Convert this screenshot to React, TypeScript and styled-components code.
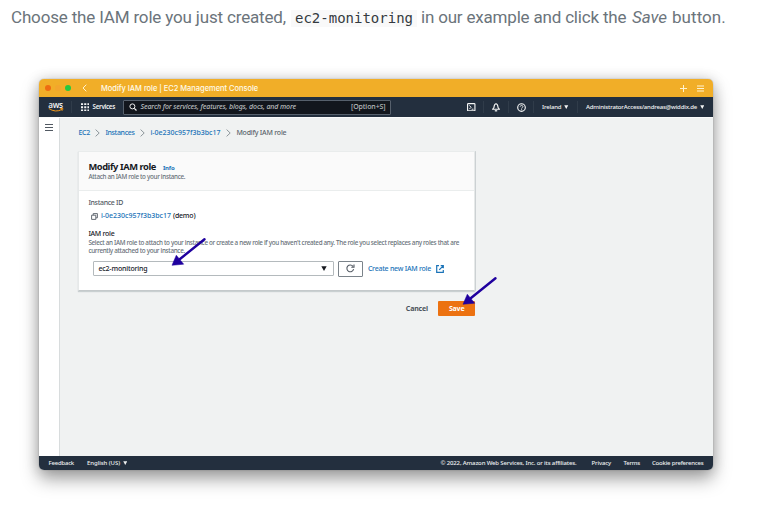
import React from 'react';
import styled, { createGlobalStyle } from 'styled-components';

const GlobalStyle = createGlobalStyle`
  * { box-sizing: border-box; }
  body { margin: 0; background: #fff; overflow: hidden; }
`;

const Article = styled.main`
  width: 778px;
  height: 515px;
  overflow: hidden;
  background: #fff;
  font-family: 'Noto Sans', 'Open Sans', sans-serif;
`;

const Intro = styled.p`
  display: flex;
  align-items: center;
  height: 34px;
  margin: 0 0 0 11px;
  white-space: pre;
  color: #6b747b;
  font: 400 17px/34px Roboto, sans-serif;
`;

const Phrase = styled.span<{ $width: number; $spacing: number }>`
  flex: none;
  width: ${(p) => p.$width}px;
  letter-spacing: ${(p) => p.$spacing}px;
`;

const Code = styled.code`
  flex: none;
  width: 126px;
  height: 17px;
  margin: 3px 4px 0 0;
  padding-left: 4px;
  background: #f9f9f9;
  color: #343a40;
  font: 14px/17px 'DejaVu Sans Mono', monospace;
`;

const Figure = styled.figure`
  margin: 28px 0 0 11px;
  padding: 17px 28px 0;
  width: 730px;
  height: 440px;
  background: #fff;
`;

const Window = styled.section`
  position: relative;
  display: flex;
  flex-direction: column;
  width: 674px;
  height: 391px;
  border-radius: 5px;
  background: #f0f2f2;
  box-shadow: 0 9px 18px rgba(0, 0, 0, 0.36), 0 0 14px rgba(0, 0, 0, 0.16), 0 0 1px rgba(0, 0, 0, 0.5);
`;

const TitleBar = styled.header`
  display: flex;
  align-items: center;
  flex: none;
  height: 18px;
  padding: 0 9px 0 6px;
  border-radius: 5px 5px 0 0;
  background: #f1ae28;
`;

const Light = styled.i<{ $color: string }>`
  width: 6px;
  height: 6px;
  margin-right: 4px;
  border-radius: 50%;
  background: ${(p) => p.$color};
`;

const WindowTitle = styled.h1`
  flex: 1;
  margin: 0;
  padding: 1px 0 0 14px;
  color: #fffbea;
  font: 500 7.5px/17px Inter, sans-serif;
  letter-spacing: -0.035px;
  white-space: nowrap;
`;

const Icon = styled.svg<{ $w: number; $h: number; $ml?: number; $mr?: number }>`
  flex: none;
  display: block;
  width: ${(p) => p.$w}px;
  height: ${(p) => p.$h}px;
  margin-left: ${(p) => p.$ml ?? 0}px;
  margin-right: ${(p) => p.$mr ?? 0}px;
  fill: none;
  stroke: currentColor;
`;

const Nav = styled.nav`
  display: flex;
  align-items: center;
  flex: none;
  height: 20px;
  padding: 0 9px 0 8.5px;
  background: #232f3e;
  color: #f4f5f5;
`;

const Brand = styled.div`
  display: flex;
  flex-direction: column;
  align-items: center;
  width: 16px;
  margin-top: -2px;
  color: #f4f5f5;
  font: 600 8.2px/7px 'Open Sans', sans-serif;
  letter-spacing: -0.25px;
`;

const Divider = styled.i<{ $ml: number; $mr: number }>`
  flex: none;
  width: 1px;
  height: 12px;
  margin-left: ${(p) => p.$ml}px;
  margin-right: ${(p) => p.$mr}px;
  background: #303c4a;
`;

const NavLabel = styled.span<{ $width: number; $size?: number; $spacing?: number; $weight?: number }>`
  flex: none;
  width: ${(p) => p.$width}px;
  font-size: ${(p) => p.$size ?? 6}px;
  font-weight: ${(p) => p.$weight ?? 500};
  line-height: 12px;
  letter-spacing: ${(p) => p.$spacing ?? -0.16}px;
  white-space: nowrap;
`;

const Search = styled.div`
  display: flex;
  align-items: center;
  flex: none;
  width: 267.5px;
  height: 15px;
  margin-left: 8px;
  padding: 0 4px 0 5px;
  border: 1px solid #56606c;
  border-radius: 1px;
  background: #12161d;
  color: #b9bdbf;
  font-size: 7px;
  line-height: 12px;
  white-space: nowrap;
`;

const Placeholder = styled.em`
  flex: 1;
  font-weight: 500;
  letter-spacing: -0.117px;
`;

const Shortcut = styled.span`
  font-weight: 500;
  letter-spacing: -0.1px;
`;

const Spacer = styled.div`
  flex: 1;
`;

const Body = styled.div`
  display: flex;
  flex: 1;
  min-height: 0;
  border-top: 1px solid #fafbfb;
`;

const Sidebar = styled.aside`
  flex: none;
  width: 20.5px;
  padding: 6px 0 0 6px;
  border-right: 1px solid #d8dcdd;
  background: #fff;
  color: #3d4650;
`;

const Content = styled.div`
  flex: 1;
  padding-left: 18.9px;
`;

const Breadcrumbs = styled.div`
  display: flex;
  align-items: center;
  height: 10px;
  margin-top: 10px;
  color: #8d979c;
`;

const Crumb = styled.span<{ $width: number; $spacing: number; $current?: boolean }>`
  flex: none;
  width: ${(p) => p.$width}px;
  color: ${(p) => (p.$current ? '#5a646c' : '#1a73b8')};
  font-size: 7px;
  font-weight: 500;
  line-height: 10px;
  letter-spacing: ${(p) => p.$spacing}px;
  white-space: nowrap;
`;

const Card = styled.section`
  width: 396.5px;
  height: 139.5px;
  margin-top: 13px;
  border: 1px solid #e6e9e9;
  border-top-color: #e9ecec;
  border-bottom-color: #c4c9cb;
  background: #fff;
  box-shadow: 0 1px 1px rgba(0, 28, 36, 0.16), 0.5px 0 0.5px rgba(0, 28, 36, 0.12);
`;

const CardHeader = styled.header`
  height: 39px;
  padding: 9px 0 0 9px;
  border-bottom: 1px solid #eaeded;
  background: #fafafa;
`;

const TitleRow = styled.div`
  display: flex;
  align-items: center;
  height: 12px;
  white-space: nowrap;
`;

const CardTitle = styled.h2`
  width: 74.5px;
  margin: 0;
  color: #16191f;
  font-size: 9.3px;
  font-weight: 700;
  line-height: 12px;
  letter-spacing: -0.42px;
`;

const InfoLink = styled.a`
  padding-top: 1px;
  color: #1a73b8;
  font-size: 6px;
  font-weight: 700;
  line-height: 10px;
  letter-spacing: -0.15px;
`;

const Hint = styled.p<{ $spacing: number }>`
  margin: 0;
  color: #687078;
  font-size: 6.3px;
  font-weight: 500;
  line-height: 7.6px;
  letter-spacing: ${(p) => p.$spacing}px;
  white-space: nowrap;
`;

const CardBody = styled.div`
  padding: 7px 0 0 9px;
`;

const FieldLabel = styled.div<{ $strong?: boolean; $spacing: number }>`
  height: 10px;
  color: ${(p) => (p.$strong ? '#16191f' : '#545b64')};
  font-size: 7px;
  font-weight: 500;
  line-height: 10px;
  letter-spacing: ${(p) => p.$spacing}px;
`;

const InstanceRow = styled.div`
  display: flex;
  align-items: center;
  height: 10px;
  margin: 3px 0 8px;
  padding-left: 3px;
  color: #16191f;
  font-size: 7px;
  font-weight: 500;
  line-height: 10px;
  white-space: nowrap;
`;

const InstanceLink = styled.a`
  width: 72px;
  margin-left: 2.5px;
  color: #1a73b8;
  letter-spacing: -0.01px;
`;

const Demo = styled.span`
  letter-spacing: -0.19px;
`;

const RoleRow = styled.div`
  display: flex;
  align-items: center;
  height: 15.5px;
  margin: 7px 0 0 4.5px;
`;

const Select = styled.div`
  display: flex;
  align-items: center;
  justify-content: space-between;
  width: 241px;
  height: 15px;
  padding: 0 6px 0 4.5px;
  border: 1px solid #b4babd;
  border-radius: 1px;
  color: #16191f;
  font-size: 7px;
  font-weight: 500;
  line-height: 12px;
  letter-spacing: -0.17px;
`;

const RefreshButton = styled.button`
  display: flex;
  align-items: center;
  justify-content: center;
  width: 25px;
  height: 15.5px;
  margin: 0 4.5px;
  padding: 0;
  border: 1px solid #7b838a;
  border-radius: 1px;
  background: #fff;
  color: #545b64;
`;

const CreateLink = styled.a`
  display: flex;
  align-items: center;
  color: #1a73b8;
  font-size: 7px;
  font-weight: 500;
  line-height: 12px;
  letter-spacing: -0.25px;
  white-space: nowrap;
`;

const Actions = styled.div`
  display: flex;
  align-items: center;
  justify-content: flex-end;
  width: 396.5px;
  margin-top: 10.5px;
`;

const Button = styled.button<{ $primary?: boolean }>`
  width: ${(p) => (p.$primary ? 36.5 : 43)}px;
  height: 15px;
  padding: 0;
  border: 0;
  border-radius: 1px;
  background: ${(p) => (p.$primary ? '#ec7211' : 'transparent')};
  color: ${(p) => (p.$primary ? '#fff' : '#4c545c')};
  font: 700 7px/15px 'Noto Sans', sans-serif;
  letter-spacing: -0.18px;
`;

const Footer = styled.footer`
  display: flex;
  align-items: center;
  flex: none;
  height: 14.5px;
  padding: 0 9px 0 9.5px;
  border-radius: 0 0 5px 5px;
  background: #232f3e;
  color: #eef0f0;
`;

const Arrow = styled.svg<{ $x: number; $y: number }>`
  position: absolute;
  left: ${(p) => p.$x}px;
  top: ${(p) => p.$y}px;
  width: 36px;
  height: 30px;
  fill: #1f009e;
  stroke: #1f009e;
`;

const Caret = ({ w = 5, h = 4, ml = 0 }: { w?: number; h?: number; ml?: number }) => (
  <Icon $w={w} $h={h} $ml={ml} viewBox="0 0 10 8" preserveAspectRatio="none">
    <path d="M0.5 0.5h9L5 7.8z" fill="currentColor" stroke="none" />
  </Icon>
);

const Separator = () => (
  <Icon $w={5} $h={8} $ml={4.5} $mr={5.5} viewBox="0 0 5 8">
    <path d="M.6.6 4.2 4 .6 7.4" />
  </Icon>
);

const Pointer = ({ x, y }: { x: number; y: number }) => (
  <Arrow $x={x} $y={y} viewBox="0 0 36 30">
    <path d="M33.5 2.3 9 22" strokeWidth="2.4" strokeLinecap="round" />
    <path d="M1 28.3 5.3 18.2 12.7 27.2z" strokeWidth=".5" />
  </Arrow>
);

export default function App() {
  return (
    <Article>
      <GlobalStyle />
      <Intro>
        <Phrase $width={280} $spacing={-0.165}>Choose the IAM role you just created,</Phrase>
        <Code>ec2-monitoring</Code>
        <Phrase $width={211} $spacing={-0.19}>in our example and click the</Phrase>
        <Phrase $width={40} $spacing={-0.1}><em>Save</em></Phrase>
        <Phrase $width={60} $spacing={0.05}>button.</Phrase>
      </Intro>
      <Figure>
        <Window>
          <TitleBar>
            <Light $color="#ee6c12" />
            <Light $color="#f3a62d" />
            <Light $color="#27c840" />
            <Icon $w={5} $h={8} $ml={7} viewBox="0 0 5 8" color="#fff3d0">
              <path d="M4.3.7 1 4l3.3 3.3" strokeWidth="1" />
            </Icon>
            <WindowTitle>Modify IAM role | EC2 Management Console</WindowTitle>
            <Icon $w={7} $h={7} viewBox="0 0 7 7" color="#fff3d0">
              <path d="M3.5 0v7M0 3.5h7" />
            </Icon>
            <Icon $w={7} $h={7} $ml={10.5} viewBox="0 0 7 7" color="#fff3d0">
              <path d="M0 1h7M0 3.5h7M0 6h7" />
            </Icon>
          </TitleBar>
          <Nav>
            <Brand>
              aws
              <Icon $w={16} $h={4} viewBox="0 0 16 4" color="#f59a1b">
                <path d="M.8.5Q7.5 5 14 1.4M12.3.6q2-.3 2.6 0 0 1-1 2.2" />
              </Icon>
            </Brand>
            <Divider $ml={7} $mr={9} />
            <Icon $w={8.5} $h={8.5} $mr={3.5} viewBox="0 0 9 9">
              <path d="M0 1.2h9M0 4.5h9M0 7.8h9" strokeWidth="2" strokeDasharray="2.2 1.2" />
            </Icon>
            <NavLabel $width={22.5} $size={6.2} $weight={600} $spacing={-0.27}>Services</NavLabel>
            <Search>
              <Icon $w={8} $h={8} $mr={3.5} viewBox="0 0 8 8" color="#eee">
                <circle cx="3.4" cy="3.4" r="2.5" />
                <path d="m5.3 5.3 2.2 2.2" strokeWidth="1.2" />
              </Icon>
              <Placeholder>Search for services, features, blogs, docs, and more</Placeholder>
              <Shortcut>[Option+S]</Shortcut>
            </Search>
            <Spacer />
            <Icon $w={8.5} $h={8.5} viewBox="0 0 9 9">
              <rect x=".6" y=".6" width="7.8" height="7.8" rx=".8" strokeWidth="1.2" />
              <path d="m2.4 2.5 2 2-2 2M4.9 6.6h2" />
            </Icon>
            <Divider $ml={7.5} $mr={8} />
            <Icon $w={8} $h={9} viewBox="0 0 8 9">
              <path d="M4 .8C2.2.9 2.2 3 2 4.2L.7 6.2h6.6L6 4.2C5.8 3 5.8.9 4 .8z" strokeWidth="1.15" />
              <path d="M2.8 7.8h2.4" strokeWidth="1.3" />
            </Icon>
            <Divider $ml={7.5} $mr={8} />
            <Icon $w={9} $h={9} viewBox="0 0 9 9">
              <circle cx="4.5" cy="4.5" r="3.8" strokeWidth="1.15" />
              <path d="M3.2 3.7c0-1.8 2.7-1.7 2.7-.1 0 1-1.3 1-1.3 2M4.6 6.2v1" strokeWidth=".9" />
            </Icon>
            <Divider $ml={7.5} $mr={8} />
            <NavLabel $width={19.5}>Ireland</NavLabel>
            <Caret w={4.5} h={4} ml={2.5} />
            <Divider $ml={8} $mr={8.5} />
            <NavLabel $width={111} $spacing={-0.173}>AdministratorAccess/andreas@widdix.de</NavLabel>
            <Caret w={4.5} h={4} ml={2.5} />
          </Nav>
          <Body>
            <Sidebar>
              <Icon $w={8} $h={7} viewBox="0 0 8 7">
                <path d="M0 .5h8M0 3.5h8M0 6.5h8" strokeWidth=".9" />
              </Icon>
            </Sidebar>
            <Content>
              <Breadcrumbs>
                <Crumb $width={12} $spacing={-0.28}>EC2</Crumb>
                <Separator />
                <Crumb $width={30} $spacing={-0.35}>Instances</Crumb>
                <Separator />
                <Crumb $width={71} $spacing={-0.01}>i-0e230c957f3b3bc17</Crumb>
                <Separator />
                <Crumb $width={52} $spacing={-0.22} $current>Modify IAM role</Crumb>
              </Breadcrumbs>
              <Card>
                <CardHeader>
                  <TitleRow>
                    <CardTitle>Modify IAM role</CardTitle>
                    <InfoLink>Info</InfoLink>
                  </TitleRow>
                  <Hint $spacing={-0.31}>Attach an IAM role to your instance.</Hint>
                </CardHeader>
                <CardBody>
                  <FieldLabel $spacing={-0.33}>Instance ID</FieldLabel>
                  <InstanceRow>
                    <Icon $w={7} $h={7} viewBox="0 0 7 7" color="#545b64">
                      <path d="M2.2.6h4.2v4.2H5M.6 2.2h4.2v4.2H.6zM2.2.6v1.5" strokeWidth=".9" />
                    </Icon>
                    <InstanceLink>i-0e230c957f3b3bc17</InstanceLink>
                    <Demo>(demo)</Demo>
                  </InstanceRow>
                  <FieldLabel $strong $spacing={-0.29}>IAM role</FieldLabel>
                  <Hint $spacing={-0.307}>
                    Select an IAM role to attach to your instance or create a new role if you haven't created any. The role you select replaces any roles that are
                    <br />
                    currently attached to your instance.
                  </Hint>
                  <RoleRow>
                    <Select>
                      ec2-monitoring
                      <Caret w={6} h={5} />
                    </Select>
                    <RefreshButton>
                      <Icon $w={9} $h={9} viewBox="0 0 9 9">
                        <path d="M7.6 5.2A3.4 3.4 0 1 1 7 2.3M8 .5v2.7H5.3" strokeWidth="1.1" />
                      </Icon>
                    </RefreshButton>
                    <CreateLink>
                      Create new IAM role
                      <Icon $w={8} $h={8} $ml={4.5} viewBox="0 0 8 8">
                        <path d="M3 .7H.7v6.6h6.6V5M4.7.7h2.6v2.6M7.2.8 3.2 4.8" strokeWidth="1.2" />
                      </Icon>
                    </CreateLink>
                  </RoleRow>
                </CardBody>
              </Card>
              <Actions>
                <Button>Cancel</Button>
                <Button $primary>Save</Button>
              </Actions>
            </Content>
          </Body>
          <Footer>
            <NavLabel $width={38.5} $spacing={-0.216}>Feedback</NavLabel>
            <NavLabel $width={33} $spacing={-0.065}>English (US)</NavLabel>
            <Caret w={4.5} h={4} ml={2.5} />
            <Spacer />
            <NavLabel $width={151} $spacing={-0.147}>© 2022, Amazon Web Services, Inc. or its affiliates.</NavLabel>
            <NavLabel $width={32} $spacing={-0.147}>Privacy</NavLabel>
            <NavLabel $width={28.5} $spacing={-0.206}>Terms</NavLabel>
            <NavLabel $width={52} $spacing={-0.207}>Cookie preferences</NavLabel>
          </Footer>
          <Pointer x={132} y={158} />
          <Pointer x={423} y={197} />
        </Window>
      </Figure>
    </Article>
  );
}
